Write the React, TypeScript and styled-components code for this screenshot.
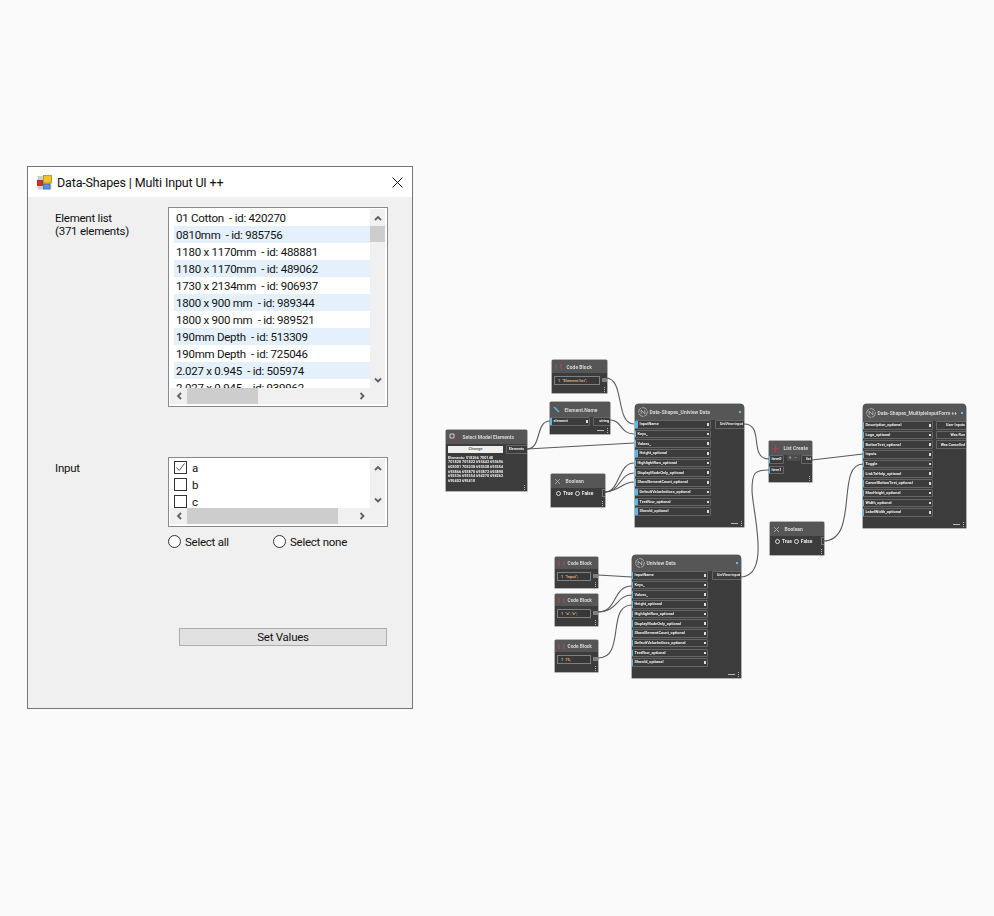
import React from "react";
import styled, { createGlobalStyle } from "styled-components";

const GlobalStyle = createGlobalStyle`
  html, body {
    margin: 0;
    padding: 0;
    background: #fafafa;
  }
`;

const Page = styled.div`
  display: flex;
  align-items: flex-start;
  width: 994px;
  height: 916px;
  overflow: hidden;
  font-family: Roboto, "Open Sans", sans-serif;
`;

/* ---------- dialog ---------- */

const Dialog = styled.div`
  box-sizing: border-box;
  flex: none;
  width: 386px;
  height: 543px;
  margin: 166px 0 0 27px;
  display: flex;
  flex-direction: column;
  border: 1px solid #777;
  background: #f0f0f0;
  font-size: 11.5px;
  letter-spacing: -0.25px;
  color: #111;
`;
const TitleBar = styled.div`
  flex: none;
  height: 30px;
  display: flex;
  align-items: center;
  padding: 0 9px 0 9px;
  gap: 5px;
  background: #fff;
  font-size: 12.5px;
  letter-spacing: -0.15px;
`;
const TitleText = styled.span`
  flex: 1;
`;
const DialogBody = styled.div`
  display: flex;
  flex-direction: column;
  padding-left: 27px;
`;
const Section = styled.div<{ $top: number }>`
  display: flex;
  margin-top: ${(p) => p.$top}px;
`;
const FieldLabel = styled.div<{ $top: number }>`
  flex: none;
  width: 113px;
  padding-top: ${(p) => p.$top}px;
  line-height: 13px;
`;
const ListBox = styled.div<{ $height: number }>`
  box-sizing: border-box;
  width: 220px;
  height: ${(p) => p.$height}px;
  border: 1px solid #8a8a8a;
  padding: 1px 1px 2px 1px;
  background: #fff;
  display: grid;
  grid-template-columns: 200px 15px;
  grid-template-rows: 1fr 16px;
`;
const ListContent = styled.div`
  overflow: hidden;
  padding-left: 4px;
  background: #fff;
`;
const ItemRow = styled.div<{ $odd: boolean }>`
  height: 17px;
  line-height: 18px;
  padding-left: 2px;
  white-space: pre;
  background: ${(p) => (p.$odd ? "#e4f0fb" : "#fff")};
`;
const CheckRow = styled.div`
  height: 17px;
  display: flex;
  align-items: center;
  gap: 5px;
`;
const CheckBox = styled.span`
  box-sizing: border-box;
  width: 13px;
  height: 13px;
  border: 1px solid #333;
  background: #fff;
  display: flex;
  align-items: center;
  justify-content: center;
`;
const VScroll = styled.div`
  grid-column: 2;
  grid-row: 1;
  background: #f0f0f0;
  display: flex;
  flex-direction: column;
  justify-content: space-between;
  position: relative;
`;
const HScroll = styled.div`
  grid-column: 1 / 3;
  grid-row: 2;
  background: #f0f0f0;
  display: flex;
  align-items: center;
`;
const ArrowCell = styled.div<{ $w?: number; $h?: number }>`
  flex: none;
  width: ${(p) => p.$w ?? 15}px;
  height: ${(p) => p.$h ?? 17}px;
  display: flex;
  align-items: center;
  justify-content: center;
`;
const VThumb = styled.div`
  width: 15px;
  height: 16px;
  background: #cdcdcd;
  position: absolute;
  top: 17px;
  left: 0;
`;
const HThumb = styled.div<{ $width: number }>`
  flex: none;
  width: ${(p) => p.$width}px;
  height: 16px;
  background: #cdcdcd;
`;
const HGap = styled.div`
  flex: 1;
`;
const ScrollCorner = styled.div`
  flex: none;
  width: 15px;
`;
const RadioRow = styled.div`
  display: flex;
  margin: 8px 0 0 113px;
`;
const RadioOption = styled.label`
  width: 105px;
  height: 13px;
  display: flex;
  align-items: center;
  gap: 4px;
`;
const RadioCircle = styled.span`
  box-sizing: border-box;
  flex: none;
  width: 13px;
  height: 13px;
  border: 1px solid #333;
  border-radius: 50%;
  background: #fff;
`;
const SetButton = styled.button`
  box-sizing: border-box;
  width: 208px;
  height: 18px;
  margin: 80px 0 0 124px;
  padding: 0 0 1px;
  border: 1px solid #adadad;
  background: #e1e1e1;
  font: inherit;
  letter-spacing: inherit;
  color: #111;
`;

/* ---------- graph ---------- */

const OX = 440;
const OY = 355;

const Canvas = styled.div`
  position: relative;
  flex: none;
  width: 540px;
  height: 340px;
  margin: ${OY}px 0 0 27px;
  filter: blur(0.45px);
`;
const Wires = styled.svg`
  position: absolute;
  left: 0;
  top: 0;
  z-index: 2;
`;
const Node = styled.div<{ $x: number; $y: number; $w: number; $h: number; $radius?: number }>`
  position: absolute;
  left: ${(p) => p.$x - OX}px;
  top: ${(p) => p.$y - OY}px;
  width: ${(p) => p.$w}px;
  height: ${(p) => p.$h}px;
  display: flex;
  flex-direction: column;
  background: #3c3c3c;
  border-radius: ${(p) => p.$radius ?? 1}px ${(p) => p.$radius ?? 1}px 0 0;
  box-shadow: 0 0 0 0.5px #6a6a6a;
  color: #ececec;
  font-weight: 700;
  overflow: hidden;
`;
const NodeHeader = styled.div<{ $h: number; $size: number }>`
  flex: none;
  height: ${(p) => p.$h}px;
  display: flex;
  align-items: center;
  gap: 1.5px;
  padding: 0 3px 0 3px;
  background: #565656;
  font-size: ${(p) => p.$size}px;
  white-space: nowrap;
  overflow: hidden;
  color: #d6d6d6;
`;
const HeaderTitle = styled.span<{ $left?: number }>`
  flex: 1;
  padding-left: ${(p) => p.$left ?? 0}px;
`;
const HeaderDot = styled.span`
  flex: none;
  width: 2px;
  height: 2px;
  background: #5fbbe8;
`;
const NodeBody = styled.div`
  flex: 1;
  display: flex;
  justify-content: space-between;
  align-items: flex-start;
  gap: 2px;
  min-height: 0;
`;
const NodeFooter = styled.div`
  flex: none;
  height: 6px;
  margin-top: auto;
  display: flex;
  justify-content: flex-end;
  align-items: center;
  gap: 3px;
  padding-right: 2px;
  margin-bottom: 1px;
`;
const FooterBar = styled.span`
  width: 7px;
  height: 1px;
  background: #b8b8b8;
`;
const FooterDots = styled.span`
  width: 1px;
  height: 5px;
  background: repeating-linear-gradient(#b0b0b0 0 1px, transparent 1px 2px);
`;
const PortList = styled.div<{ $gap?: number }>`
  display: flex;
  flex-direction: column;
  gap: ${(p) => p.$gap ?? 1.2}px;
`;
const Port = styled.div<{ $w: number; $bar: number }>`
  box-sizing: border-box;
  flex: none;
  width: ${(p) => p.$w}px;
  height: 8.5px;
  display: flex;
  align-items: center;
  justify-content: space-between;
  padding: 0 1.5px;
  border: 0.5px solid #666;
  border-left: ${(p) => p.$bar}px solid #5ab7e6;
  border-radius: 1.5px;
  font-size: 3.9px;
  line-height: 1;
  white-space: nowrap;
  overflow: hidden;
`;
const PortMark = styled.span`
  flex: none;
  width: 1.5px;
  height: 2.5px;
  background: #ddd;
`;
const OutPort = styled.div<{ $w: number }>`
  box-sizing: border-box;
  flex: none;
  width: ${(p) => p.$w}px;
  height: 8.5px;
  display: flex;
  align-items: center;
  justify-content: flex-end;
  padding-right: 1px;
  border: 0.5px solid #666;
  border-right: none;
  border-radius: 1.5px 0 0 1.5px;
  font-size: 3.7px;
  white-space: nowrap;
  overflow: hidden;
`;
const AddRemove = styled.div`
  flex: none;
  width: 13px;
  height: 6px;
  margin-right: -1px;
  display: flex;
  justify-content: center;
  gap: 3px;
  background: #4c4c4c;
  font-size: 5px;
  line-height: 5px;
  color: #aaa;
`;
const CodeRow = styled.div`
  display: flex;
  align-items: center;
  gap: 2px;
  padding: 2.5px 0 0 2px;
`;
const CodeInput = styled.div<{ $w: number }>`
  box-sizing: border-box;
  width: ${(p) => p.$w}px;
  height: 9px;
  display: flex;
  align-items: center;
  padding-left: 3px;
  gap: 2px;
  background: #383838;
  border: 0.5px solid #808080;
  font-size: 4px;
  white-space: nowrap;
  color: #dcaa80;
`;
const LineNo = styled.span`
  color: #bbb;
`;
const CodeOut = styled.div`
  width: 5px;
  height: 4px;
  background: #808080;
  border-radius: 0.5px;
`;
const BooleanRow = styled.div`
  display: flex;
  align-items: center;
  width: 100%;
  padding: 1px 0 0 5px;
  gap: 2px;
  font-size: 4.8px;
`;
const BoolDot = styled.span`
  flex: none;
  width: 3px;
  height: 3px;
  border: 0.5px solid #ddd;
  border-radius: 50%;
`;
const BoolOut = styled.div`
  box-sizing: border-box;
  flex: none;
  margin-left: auto;
  width: 8px;
  height: 8px;
  border: 0.5px solid #777;
  border-right: none;
  display: flex;
  align-items: center;
  justify-content: center;
`;
const SelectBody = styled.div`
  flex: 1;
  display: flex;
  flex-direction: column;
  padding: 1px 0 0 2px;
  min-height: 0;
`;
const ChangeRow = styled.div`
  display: flex;
  gap: 3px;
`;
const ChangeButton = styled.div`
  flex: none;
  width: 55px;
  height: 6.5px;
  background: #efefef;
  color: #666;
  font-size: 4.1px;
  line-height: 6.5px;
  text-align: center;
  margin-top: 1px;
`;
const SelectOutput = styled(OutPort)`
  flex: 1;
  width: auto;
  justify-content: center;
`;
const SelectedIds = styled.div`
  margin-top: 2px;
  width: 56px;
  font-size: 3.8px;
  line-height: 4.7px;
  color: #f0f0f0;
`;

/* ---------- small drawings ---------- */

const AppIcon = () => (
  <svg width="15" height="15" viewBox="0 0 15 15">
    <rect x="0.5" y="1" width="14" height="13.5" fill="#cfcfcf" />
    <rect x="6.5" y="0.5" width="8" height="7.5" fill="#f2c230" stroke="#a88214" strokeWidth="0.7" />
    <rect x="0.5" y="5.5" width="5" height="5" fill="#d83020" stroke="#8a1a10" strokeWidth="0.7" />
    <rect x="6.5" y="9" width="6.5" height="5" fill="#5b93dc" stroke="#2d5fa8" strokeWidth="0.7" />
  </svg>
);
const CloseIcon = () => (
  <svg width="11" height="11" viewBox="0 0 11 11">
    <path d="M0.5 0.5L10.5 10.5M10.5 0.5L0.5 10.5" stroke="#111" strokeWidth="1" fill="none" />
  </svg>
);
const Chevron = ({ dir }: { dir: "up" | "down" | "left" | "right" }) => {
  const d = {
    up: "M1 5L4 2L7 5",
    down: "M1 1.5L4 4.5L7 1.5",
    left: "M5 1L2 4L5 7",
    right: "M1.5 1L4.5 4L1.5 7",
  }[dir];
  const vertical = dir === "up" || dir === "down";
  return (
    <svg width={vertical ? 8 : 6} height={vertical ? 6 : 8} viewBox={vertical ? "0 0 8 6" : "0 0 6 8"}>
      <path d={d} stroke="#606060" strokeWidth="1.8" fill="none" />
    </svg>
  );
};
const CheckMark = () => (
  <svg width="11" height="11" viewBox="0 0 11 11">
    <path d="M1.5 5.5L4.2 8.5L9.5 1.5" stroke="#555" strokeWidth="1" fill="none" />
  </svg>
);
const NodeIcon = ({ kind }: { kind: string }) => {
  if (kind === "logo") {
    return (
      <svg width="10" height="10" viewBox="0 0 11 11" style={{ flex: "none" }}>
        <circle cx="5.5" cy="5.5" r="4.8" stroke="#ddd" strokeWidth="0.7" fill="none" strokeDasharray="6 1" />
        <path d="M3.5 7.5V3.5L7.5 7.5V3.5" stroke="#ddd" strokeWidth="0.7" fill="none" />
      </svg>
    );
  }
  if (kind === "code") {
    return (
      <svg width="7" height="7" viewBox="0 0 7 7" style={{ flex: "none" }}>
        <path d="M1 1V6M6 1V6" stroke="#a85050" strokeWidth="1" fill="none" />
      </svg>
    );
  }
  if (kind === "list") {
    return (
      <svg width="7" height="7" viewBox="0 0 7 7" style={{ flex: "none" }}>
        <path d="M3.5 0.5V6.5M0.5 3.5H6.5" stroke="#b84040" strokeWidth="1" fill="none" />
      </svg>
    );
  }
  if (kind === "name") {
    return (
      <svg width="7" height="7" viewBox="0 0 7 7" style={{ flex: "none" }}>
        <path d="M1 1L6 6" stroke="#5ab7e6" strokeWidth="1.4" fill="none" />
      </svg>
    );
  }
  if (kind === "select") {
    return (
      <svg width="8" height="8" viewBox="0 0 8 8" style={{ flex: "none" }}>
        <path d="M1 1H5V5H1Z" stroke="#ccc" strokeWidth="1" fill="none" />
        <path d="M5 5L7.5 7.5" stroke="#c03030" strokeWidth="1.4" fill="none" />
      </svg>
    );
  }
  return (
    <svg width="7" height="7" viewBox="0 0 7 7" style={{ flex: "none" }}>
      <path d="M1 1L6 6M6 1L1 6" stroke="#bbb" strokeWidth="0.8" fill="none" />
    </svg>
  );
};

/* ---------- data ---------- */

const elements = [
  "01 Cotton  - id: 420270",
  "0810mm  - id: 985756",
  "1180 x 1170mm  - id: 488881",
  "1180 x 1170mm  - id: 489062",
  "1730 x 2134mm  - id: 906937",
  "1800 x 900 mm  - id: 989344",
  "1800 x 900 mm  - id: 989521",
  "190mm Depth  - id: 513309",
  "190mm Depth  - id: 725046",
  "2.027 x 0.945  - id: 505974",
  "2.027 x 0.945  - id: 939962",
];

const univiewPorts = [
  "InputName",
  "Keys_",
  "Values_",
  "Height_optional",
  "HighlightRow_optional",
  "DisplayModeOnly_optional",
  "ShowElementCount_optional",
  "DefaultValueIndices_optional",
  "TextRow_optional",
  "ShowId_optional",
];
const firstBars = [3, 1, 1, 3, 1, 1, 1, 3, 3, 3];
const multiPorts = [
  "Description_optional",
  "Logo_optional",
  "ButtonText_optional",
  "Inputs",
  "Toggle",
  "LinkToHelp_optional",
  "CancelButtonText_optional",
  "MaxHeight_optional",
  "Width_optional",
  "LabelWidth_optional",
];
const multiOutputs = ["User Inputs", "Was Run", "Was Cancelled"];

const wires = [
  "M606 378C625 378 615 424 634 424",
  "M527 449C542 449 535 421 550 421",
  "M527 449L634 443",
  "M610 420C622 420 620 434 634 434",
  "M605 492C620 492 618 463 634 463",
  "M605 492C620 492 620 473 634 473",
  "M605 492C622 490 622 482 634 482",
  "M744 424C765 424 748 459 769 459",
  "M740 577C772 577 752 510 752 490C752 472 755 470 769 470",
  "M812 460L863 454",
  "M823 541C860 541 835 464 863 464",
  "M598 575L632 577",
  "M598 612C618 612 612 586 632 586",
  "M598 612C618 612 616 595 632 595",
  "M598 658C626 658 606 605 632 605",
];

const codeBlocks = [
  { x: 555, y: 557, h: 31, text: '"Input";' },
  { x: 555, y: 594, h: 32, text: '"a".."e";' },
  { x: 555, y: 640, h: 32, text: "75;" },
];

const Footer = ({ bar = true }: { bar?: boolean }) => (
  <NodeFooter>
    {bar && <FooterBar />}
    <FooterDots />
  </NodeFooter>
);

const BooleanNode = ({ x, y }: { x: number; y: number }) => (
  <Node $x={x} $y={y} $w={54} $h={33}>
    <NodeHeader $h={14} $size={5}>
      <NodeIcon kind="bool" />
      <HeaderTitle $left={3}>Boolean</HeaderTitle>
    </NodeHeader>
    <BooleanRow>
      <BoolDot />
      True
      <BoolDot />
      False
      <BoolOut>
        <PortMark />
      </BoolOut>
    </BooleanRow>
    <Footer bar={false} />
  </Node>
);

const Uniview = ({
  x,
  y,
  title,
  bars,
}: {
  x: number;
  y: number;
  title: string;
  bars: number[];
}) => (
  <Node $x={x} $y={y} $w={109} $h={123} $radius={4}>
    <NodeHeader $h={16} $size={5}>
      <NodeIcon kind="logo" />
      <HeaderTitle>{title}</HeaderTitle>
      <HeaderDot />
    </NodeHeader>
    <NodeBody>
      <PortList>
        {univiewPorts.map((name, i) => (
          <Port key={name} $w={76} $bar={bars[i]}>
            {name}
            <PortMark />
          </Port>
        ))}
      </PortList>
      <OutPort $w={29}>UniView input</OutPort>
    </NodeBody>
    <Footer />
  </Node>
);

const App = () => (
  <>
    <GlobalStyle />
    <Page>
      <Dialog>
        <TitleBar>
          <AppIcon />
          <TitleText>Data-Shapes | Multi Input UI ++</TitleText>
          <CloseIcon />
        </TitleBar>
        <DialogBody>
          <Section $top={10}>
            <FieldLabel $top={5}>
              Element list
              <br />
              (371 elements)
            </FieldLabel>
            <ListBox $height={200}>
              <ListContent>
                {elements.map((item, i) => (
                  <ItemRow key={item} $odd={i % 2 === 1}>
                    {item}
                  </ItemRow>
                ))}
              </ListContent>
              <VScroll>
                <ArrowCell>
                  <Chevron dir="up" />
                </ArrowCell>
                <VThumb />
                <ArrowCell>
                  <Chevron dir="down" />
                </ArrowCell>
              </VScroll>
              <HScroll>
                <ArrowCell $w={17} $h={16}>
                  <Chevron dir="left" />
                </ArrowCell>
                <HThumb $width={71} />
                <HGap />
                <ArrowCell $w={17} $h={16}>
                  <Chevron dir="right" />
                </ArrowCell>
                <ScrollCorner />
              </HScroll>
            </ListBox>
          </Section>
          <Section $top={50}>
            <FieldLabel $top={5}>Input</FieldLabel>
            <ListBox $height={70}>
              <ListContent>
                <CheckRow>
                  <CheckBox>
                    <CheckMark />
                  </CheckBox>
                  a
                </CheckRow>
                <CheckRow>
                  <CheckBox />b
                </CheckRow>
                <CheckRow>
                  <CheckBox />c
                </CheckRow>
              </ListContent>
              <VScroll>
                <ArrowCell>
                  <Chevron dir="up" />
                </ArrowCell>
                <ArrowCell>
                  <Chevron dir="down" />
                </ArrowCell>
              </VScroll>
              <HScroll>
                <ArrowCell $w={17} $h={16}>
                  <Chevron dir="left" />
                </ArrowCell>
                <HThumb $width={151} />
                <HGap />
                <ArrowCell $w={17} $h={16}>
                  <Chevron dir="right" />
                </ArrowCell>
                <ScrollCorner />
              </HScroll>
            </ListBox>
          </Section>
          <RadioRow>
            <RadioOption>
              <RadioCircle />
              Select all
            </RadioOption>
            <RadioOption>
              <RadioCircle />
              Select none
            </RadioOption>
          </RadioRow>
          <SetButton>Set Values</SetButton>
        </DialogBody>
      </Dialog>

      <Canvas>
        <Node $x={552} $y={360} $w={55} $h={33}>
          <NodeHeader $h={13} $size={5}>
            <NodeIcon kind="code" />
            <HeaderTitle $left={3}>Code Block</HeaderTitle>
          </NodeHeader>
          <CodeRow>
            <CodeInput $w={46}>
              <LineNo>1</LineNo>"Element list";
            </CodeInput>
            <CodeOut />
          </CodeRow>
          <Footer bar={false} />
        </Node>

        <Node $x={550} $y={402} $w={60} $h={32}>
          <NodeHeader $h={15} $size={5}>
            <NodeIcon kind="name" />
            <HeaderTitle $left={3}>Element.Name</HeaderTitle>
          </NodeHeader>
          <NodeBody>
            <Port $w={40} $bar={2}>
              element
              <PortMark />
            </Port>
            <OutPort $w={17}>string</OutPort>
          </NodeBody>
          <Footer />
        </Node>

        <Node $x={446} $y={430} $w={81} $h={61}>
          <NodeHeader $h={14} $size={5}>
            <NodeIcon kind="select" />
            <HeaderTitle $left={4}>Select Model Elements</HeaderTitle>
          </NodeHeader>
          <SelectBody>
            <ChangeRow>
              <ChangeButton>Change</ChangeButton>
              <SelectOutput $w={20}>Elements</SelectOutput>
            </ChangeRow>
            <SelectedIds>
              Elements: 518266 700148 701820 701822 693442 693696 603001 703238 693538
              693554 693866 693870 693872 693898 693536 693554 694270 694262 695402
              695410
            </SelectedIds>
          </SelectBody>
          <Footer bar={false} />
        </Node>

        <BooleanNode x={551} y={474} />

        <Uniview x={635} y={404} title="Data-Shapes_Uniview Data" bars={firstBars} />

        <Node $x={769} $y={441} $w={43} $h={41}>
          <NodeHeader $h={14} $size={5}>
            <NodeIcon kind="list" />
            <HeaderTitle $left={3}>List Create</HeaderTitle>
          </NodeHeader>
          <NodeBody>
            <PortList $gap={2}>
              <Port $w={15} $bar={1}>
                item0
              </Port>
              <Port $w={15} $bar={1}>
                item1
              </Port>
            </PortList>
            <AddRemove>
              <span>+</span>
              <span>−</span>
            </AddRemove>
            <OutPort $w={11}>list</OutPort>
          </NodeBody>
          <Footer bar={false} />
        </Node>

        <BooleanNode x={770} y={522} />

        <Node $x={863} $y={404} $w={103} $h={124} $radius={4}>
          <NodeHeader $h={17} $size={5}>
            <NodeIcon kind="logo" />
            <HeaderTitle>Data-Shapes_MultipleInputForm ++</HeaderTitle>
            <HeaderDot />
          </NodeHeader>
          <NodeBody>
            <PortList>
              {multiPorts.map((name) => (
                <Port key={name} $w={70} $bar={1}>
                  {name}
                  <PortMark />
                </Port>
              ))}
            </PortList>
            <PortList>
              {multiOutputs.map((name) => (
                <OutPort key={name} $w={30}>
                  {name}
                </OutPort>
              ))}
            </PortList>
          </NodeBody>
          <Footer />
        </Node>

        {codeBlocks.map((c) => (
          <Node key={c.y} $x={c.x} $y={c.y} $w={43} $h={c.h}>
            <NodeHeader $h={12} $size={4.8}>
              <NodeIcon kind="code" />
              <HeaderTitle $left={1}>Code Block</HeaderTitle>
            </NodeHeader>
            <CodeRow>
              <CodeInput $w={34}>
                <LineNo>1</LineNo>
                {c.text}
              </CodeInput>
              <CodeOut />
            </CodeRow>
            <Footer bar={false} />
          </Node>
        ))}

        <Uniview x={632} y={555} title="Uniview Data" bars={[1, 1, 1, 1, 1, 1, 1, 1, 1, 1]} />

        <Wires width="540" height="340" viewBox={`${OX} ${OY} 540 340`}>
          {wires.map((d) => (
            <path key={d} d={d} fill="none" stroke="#5a5a5a" strokeWidth="1.1" />
          ))}
        </Wires>
      </Canvas>
    </Page>
  </>
);

export default App;
